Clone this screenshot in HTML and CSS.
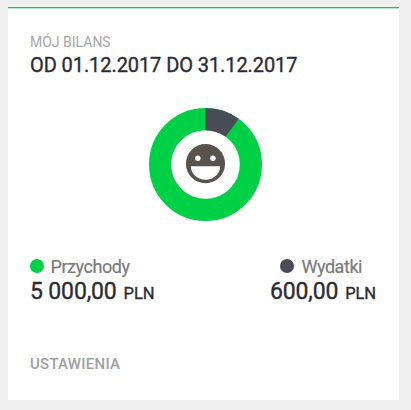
FILE: index.html
```html
<!DOCTYPE html>
<html lang="pl">
<head>
<meta charset="utf-8">
<title>Mój bilans</title>
<link rel="stylesheet" href="styles.css">
</head>
<body>
<section class="card">
  <header class="header">
    <div class="label"><span>MÓJ BILANS</span></div>
    <div class="period"><span>OD 01.12.2017 DO 31.12.2017</span></div>
  </header>
  <svg class="chart" viewBox="0 0 112 112" width="113" height="113">
    <circle cx="56" cy="56" r="45" fill="none" stroke="#00d046" stroke-width="22"/>
    <path d="M56 0A56 56 0 0 1 88.92 10.7L75.98 28.5A34 34 0 0 0 56 22Z" fill="#4a4c55"/>
    <circle cx="56" cy="55.2" r="19.4" fill="#58544d"/>
    <circle cx="48.4" cy="49.8" r="2.7" fill="#fff"/>
    <circle cx="63.4" cy="49.8" r="2.7" fill="#fff"/>
    <path d="M41.5 57.8H70.5A14.5 13.3 0 0 1 41.5 57.8Z" fill="#fff"/>
  </svg>
  <div class="totals">
    <div class="total">
      <div class="name"><i class="dot income"></i><span class="income-name">Przychody</span></div>
      <div class="amount"><span class="value">5 000,00</span><span class="currency">PLN</span></div>
    </div>
    <div class="total right">
      <div class="name"><i class="dot expense"></i><span class="expense-name">Wydatki</span></div>
      <div class="amount"><span class="value">600,00</span><span class="currency">PLN</span></div>
    </div>
  </div>
  <div class="settings"><span>USTAWIENIA</span></div>
</section>
</body>
</html>
```
FILE: styles.css
```css
* { box-sizing: border-box; }
body {
  margin: 0;
  padding: 7px 12px 10px 8px;
  height: 410px;
  background: #efefef;
  font-family: Roboto, "Liberation Sans", sans-serif;
}
.card {
  display: flex;
  flex-direction: column;
  height: 393px;
  padding: 26px 23px 0 22px;
  background: #fff;
  border-top: 1px solid #1cc35c;
  box-shadow: inset 0 1px #b5ecca;
}
.label { height: 16px; font-size: 14px; line-height: 16px; color: #a6a6a6; }
.period { height: 30px; font-size: 20px; line-height: 30px; color: #2b2c33; white-space: nowrap; letter-spacing: -.08px; -webkit-text-stroke: .35px #2b2c33; }
.chart { margin: 28px 0 0 119px; flex: none; }
.totals { display: flex; justify-content: space-between; margin-top: 33px; }
.name { display: flex; align-items: center; height: 24px; font-size: 18px; color: #7b7b7b; letter-spacing: -.45px; -webkit-text-stroke: .2px #7b7b7b; }
.dot { width: 14px; height: 14px; margin: 0 7px 0 -.5px; border-radius: 50%; }
.income { background: #00d046; }
.expense { background: #4a4c55; }
.right .name { justify-content: flex-end; padding-right: 14px; }
.amount { display: flex; align-items: baseline; gap: 7px; height: 28px; line-height: 28px; color: #2b2c33; white-space: nowrap; -webkit-text-stroke: .35px #2b2c33; }
.value { font-size: 23px; letter-spacing: -.15px; }
.currency { font-size: 16.5px; letter-spacing: -.1px; }
.settings { margin-top: 48px; font-size: 15px; line-height: 20px; font-weight: 500; letter-spacing: .25px; color: #a0a0a0; }
```
